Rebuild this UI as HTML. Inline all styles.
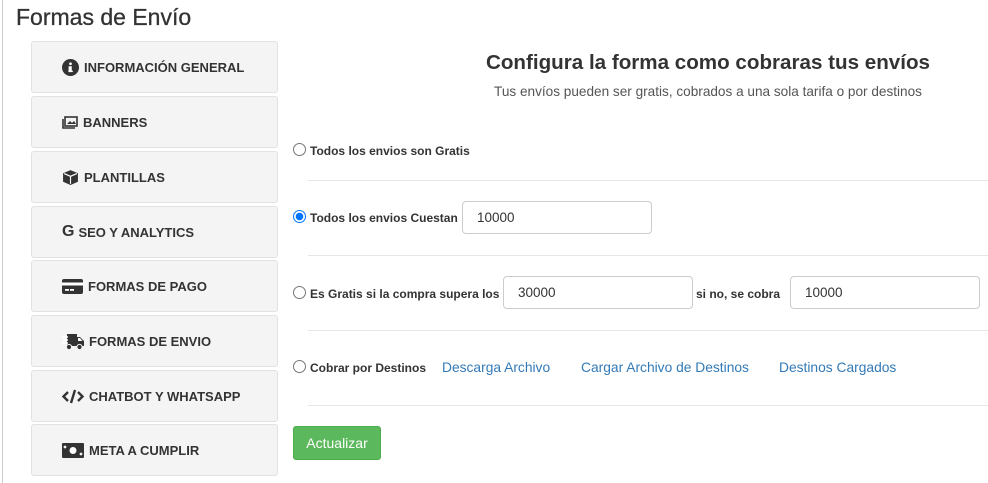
<!DOCTYPE html>
<html><head><meta charset="utf-8"><style>
*{box-sizing:border-box;margin:0;padding:0}
body{width:988px;height:483px;background:#fff;font-family:"Liberation Sans",Arial,sans-serif;color:#333;position:relative;overflow:hidden}
.a{position:absolute;white-space:nowrap}
.vl{position:absolute;left:2px;top:0;width:1px;height:483px;background:#ccc}
.btn{position:absolute;left:31px;width:247px;height:52px;background:#f4f4f4;border:1px solid #e2e2e2;border-radius:3px;font-weight:bold;font-size:13px;color:#333;display:flex;align-items:center;padding-left:30px}
.btn svg{margin-right:5px;flex:none}
.hr{position:absolute;left:308px;right:0;height:1px;background:#e6e6e6}
.lbl{font-size:12px;font-weight:bold;color:#333}
.rad{position:absolute;width:13px;height:13px;border:1px solid #767676;border-radius:50%;background:#fff}
.inp{position:absolute;height:33px;border:1px solid #ccc;border-radius:4px;font-size:13.5px;color:#333;padding-left:14px;line-height:31px}
.lk{color:#337ab7;font-size:13.8px}
</style></head><body>
<div class="vl"></div>
<div class="a" style="left:16px;top:4px;font-size:23px;color:#333;-webkit-text-stroke:0.3px #333">Formas de Envío</div>

<div class="btn" style="top:41px"><svg width="17" height="17" viewBox="0 0 16 16"><circle cx="8" cy="8" r="8" fill="#333"/><circle cx="8" cy="4.5" r="1.3" fill="#fff"/><rect x="6.2" y="6.8" width="3" height="5.5" fill="#fff"/><rect x="6" y="11" width="4.2" height="1.3" fill="#fff"/></svg>INFORMACIÓN GENERAL</div>
<div class="btn" style="top:96px"><svg width="16" height="13" viewBox="0 0 16 13"><rect x="3" y="1" width="12" height="9" fill="none" stroke="#333" stroke-width="1.6"/><path d="M1 3v9h12" fill="none" stroke="#333" stroke-width="1.6"/><path d="M5 8l3-3 2 2 2-2 2 3z" fill="#333"/></svg>BANNERS</div>
<div class="btn" style="top:151px"><svg width="17" height="17" viewBox="0 0 16 16"><path d="M8 1l7 3v8l-7 3-7-3V4z" fill="#333"/><path d="M2 4.3l6 2.6 6-2.6M8 7v7" stroke="#fff" stroke-width="1.1" fill="none"/></svg>PLANTILLAS</div>
<div class="btn" style="top:206px"><span style="font-size:16px;font-weight:bold;margin-right:4px">G</span>SEO Y ANALYTICS</div>
<div class="btn" style="top:260px"><svg width="21" height="15" viewBox="0 0 21 15"><rect x="0" y="0" width="21" height="15" rx="2" fill="#333"/><rect x="0" y="3.5" width="21" height="3" fill="#fff"/><rect x="3" y="10" width="4" height="1.8" fill="#fff"/><rect x="8" y="10" width="4" height="1.8" fill="#fff"/></svg>FORMAS DE PAGO</div>
<div class="btn" style="top:315px"><svg width="22" height="17" viewBox="0 0 22 17"><path d="M5 1h10v3h3l4 4v5H5z" fill="#333"/><path d="M0 4h6M1 7h5M0 10h6" stroke="#fff" stroke-width="1.4"/><path d="M16 5h2l2.5 3H16z" fill="#fff"/><circle cx="7" cy="14" r="2.6" fill="#333" stroke="#f4f4f4"/><circle cx="17.5" cy="14" r="2.6" fill="#333" stroke="#f4f4f4"/></svg>FORMAS DE ENVIO</div>
<div class="btn" style="top:370px"><svg width="22" height="15" viewBox="0 0 22 15"><path d="M6 3L1.5 7.5 6 12M16 3l4.5 4.5L16 12M13 1L9 14" stroke="#333" stroke-width="2.4" fill="none"/></svg>CHATBOT Y WHATSAPP</div>
<div class="btn" style="top:424px"><svg width="22" height="15" viewBox="0 0 22 15"><rect x="0" y="0" width="22" height="15" rx="1" fill="#333"/><circle cx="11" cy="7.5" r="3.5" fill="#fff"/><circle cx="3" cy="4" r="1.4" fill="#f4f4f4"/><circle cx="19" cy="11" r="1.4" fill="#f4f4f4"/></svg>META A CUMPLIR</div>

<div class="a" style="left:428px;width:560px;text-align:center;top:51px;font-size:20.6px;font-weight:bold;color:#333">Configura la forma como cobraras tus envíos</div>
<div class="a" style="left:428px;width:560px;text-align:center;top:84px;font-size:13.6px;color:#555">Tus envíos pueden ser gratis, cobrados a una sola tarifa o por destinos</div>

<div class="rad" style="left:293px;top:143px"></div>
<div class="a lbl" style="left:310px;top:144px">Todos los envios son Gratis</div>
<div class="hr" style="top:180px"></div>

<div class="rad" style="left:293px;top:210px;border:1px solid #0075ff;background:radial-gradient(circle,#0075ff 3.5px,#fff 4px)"></div>
<div class="a lbl" style="left:310px;top:211px">Todos los envios Cuestan</div>
<div class="inp" style="left:462px;top:201px;width:190px">10000</div>
<div class="hr" style="top:255px"></div>

<div class="rad" style="left:293px;top:286px"></div>
<div class="a lbl" style="left:310px;top:287px">Es Gratis si la compra supera los</div>
<div class="inp" style="left:503px;top:276px;width:190px">30000</div>
<div class="a lbl" style="left:696px;top:287px">si no, se cobra</div>
<div class="inp" style="left:790px;top:276px;width:190px">10000</div>
<div class="hr" style="top:330px"></div>

<div class="rad" style="left:293px;top:360px"></div>
<div class="a lbl" style="left:310px;top:361px">Cobrar por Destinos</div>
<div class="a lk" style="left:442px;top:360px">Descarga Archivo</div>
<div class="a lk" style="left:581px;top:360px">Cargar Archivo de Destinos</div>
<div class="a lk" style="left:779px;top:360px">Destinos Cargados</div>
<div class="hr" style="top:405px"></div>

<div class="a" style="left:293px;top:426px;width:88px;height:34px;background:#5cb85c;border:1px solid #4cae4c;border-radius:3px;color:#fff;font-size:14px;text-align:center;line-height:32px">Actualizar</div>
</body></html>
